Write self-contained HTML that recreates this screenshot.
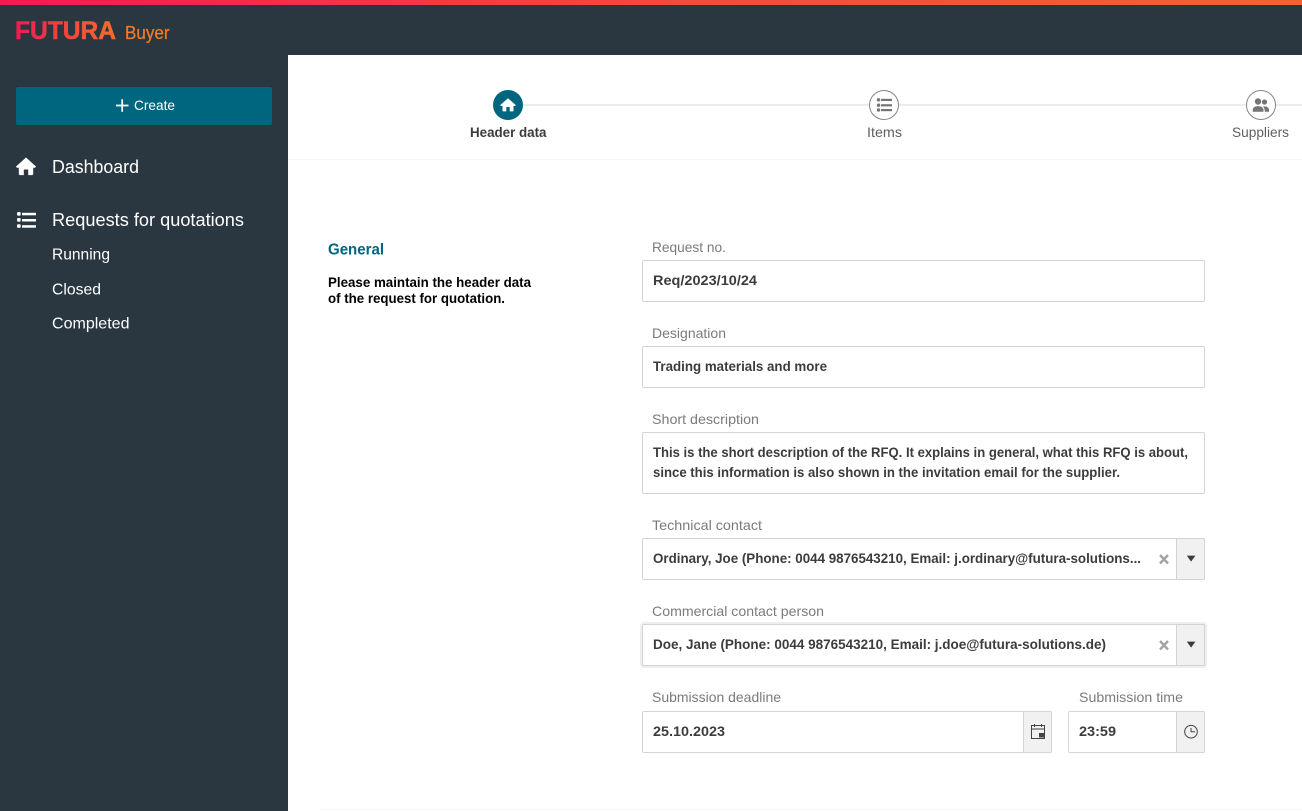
<!DOCTYPE html>
<html lang="en">
<head>
<meta charset="utf-8">
<title>FUTURA Buyer</title>
<style>
html,body{margin:0;padding:0;background:#fff}
#app{position:relative;width:1302px;height:811px;overflow:hidden;background:#fff;font-family:"Liberation Sans",sans-serif}
#app div{position:absolute;box-sizing:border-box}
.top{left:0;top:0;width:1302px;height:55px;background:#2a3640}
.bar{left:0;top:0;width:1302px;height:5px;background:linear-gradient(90deg,#ef1c52 0,#f4483f 50%,#f56133 100%)}
.side{left:0;top:55px;width:288px;height:756px;background:#2a3640}
.btn{left:16px;top:87px;width:256px;height:38px;background:#006680;border-radius:2px}
.hr1{left:288px;top:159px;width:1014px;height:1px;background:#f5f5f5}
.hr2{left:320px;top:809px;width:982px;height:1px;background:#f5f5f5}
.f{background:#fff;border:1px solid #d4d4d4;border-radius:2px}
.add{background:#f1f1f1;border:1px solid #d4d4d4;border-radius:0 2px 2px 0}
svg{position:absolute;left:0;top:0}
.l{font-size:14px;fill:#7b7b7b}
.v{font-size:14px;font-weight:700;fill:#3c3c3c}
.n{fill:#fff}
</style>
</head>
<body>
<div id="app">
<div class="top"></div>
<div class="bar"></div>
<div class="side"></div>
<div class="btn"></div>
<div class="hr1"></div>
<div class="hr2"></div>
<div class="f" style="left:642px;top:260px;width:563px;height:42px"></div>
<div class="f" style="left:642px;top:346px;width:563px;height:42px"></div>
<div class="f" style="left:642px;top:432px;width:563px;height:62px"></div>
<div class="f" style="left:642px;top:538px;width:563px;height:42px"></div>
<div class="add" style="left:1176px;top:538px;width:29px;height:42px"></div>
<div class="f" style="left:642px;top:624px;width:563px;height:42px;box-shadow:0 0 0 2px #eee"></div>
<div class="add" style="left:1176px;top:624px;width:29px;height:42px"></div>
<div class="f" style="left:642px;top:711px;width:410px;height:42px"></div>
<div class="add" style="left:1023px;top:711px;width:29px;height:42px"></div>
<div class="f" style="left:1068px;top:711px;width:137px;height:42px"></div>
<div class="add" style="left:1176px;top:711px;width:29px;height:42px"></div>

<svg width="1302" height="811" viewBox="0 0 1302 811" font-family="'Liberation Sans',sans-serif">
<defs>
<linearGradient id="g" gradientUnits="userSpaceOnUse" x1="15" y1="0" x2="130" y2="0">
<stop offset="0" stop-color="#ee1c52"/><stop offset="1" stop-color="#f47a26"/>
</linearGradient>
</defs>

<text x="15" y="39" font-size="25" font-weight="700" fill="url(#g)" stroke="url(#g)" stroke-width=".5" textLength="101" lengthAdjust="spacingAndGlyphs">FUTURA</text>
<text x="125" y="39" font-size="18" fill="#f47a26" stroke="#f47a26" stroke-width=".25" textLength="44.5" lengthAdjust="spacingAndGlyphs">Buyer</text>

<path d="M116 105.5h12.5M122.2 99.2v12.5" stroke="#fff" stroke-width="1.7" fill="none"/>
<text class="n" x="134" y="110" font-size="14" textLength="41" lengthAdjust="spacingAndGlyphs">Create</text>

<path d="M26 157.5L16 166.5l.8 1.2h2v6.2c0 .8.5 1.2 1.2 1.2h3.8v-5.6h4.4v5.6H32c.7 0 1.2-.4 1.2-1.2v-6.2h2l.8-1.2z" fill="#fff"/>
<text class="n" x="52" y="173" font-size="18" textLength="87" lengthAdjust="spacingAndGlyphs">Dashboard</text>

<g fill="#fff">
<rect x="17" y="212" width="3.7" height="3.7" rx="1.2"/><rect x="17" y="218" width="3.7" height="3.7" rx="1.2"/><rect x="17" y="224.2" width="3.7" height="3.7" rx="1.2"/>
<rect x="22" y="212.8" width="14" height="2.5"/><rect x="22" y="219" width="14" height="2.5"/><rect x="22" y="225.2" width="14" height="2.5"/>
</g>
<text class="n" x="52" y="226" font-size="18" textLength="192" lengthAdjust="spacingAndGlyphs">Requests for quotations</text>
<text class="n" x="52" y="259.5" font-size="16" textLength="58" lengthAdjust="spacingAndGlyphs">Running</text>
<text class="n" x="52" y="294.5" font-size="16" textLength="49" lengthAdjust="spacingAndGlyphs">Closed</text>
<text class="n" x="52" y="328.5" font-size="16" textLength="77.5" lengthAdjust="spacingAndGlyphs">Completed</text>

<rect x="508" y="104" width="794" height="2" fill="#ececec"/>
<circle cx="508" cy="105" r="15" fill="#006680"/>
<path d="M508 98.2l-7.8 6.9.6.9h1.7v4.6c0 .5.3.8.8.8h3v-4.4h3.4v4.4h3c.5 0 .8-.3.8-.8V106h1.7l.6-.9z" fill="#fff"/>
<circle cx="884" cy="105" r="14.5" fill="#fff" stroke="#858585"/>
<g fill="#757575">
<circle cx="878.5" cy="99.8" r="1.7"/><circle cx="878.5" cy="105.2" r="1.7"/><circle cx="878.5" cy="110" r="1.7"/>
<rect x="881" y="98.8" width="11" height="2.2"/><rect x="881" y="104.2" width="11" height="2.2"/><rect x="881" y="109" width="11" height="2.2"/>
</g>
<circle cx="1261" cy="105" r="14.5" fill="#fff" stroke="#858585"/>
<g fill="#757575">
<circle cx="1264.5" cy="102" r="2.6"/>
<path d="M1263 106.5c3.5-.6 6 .8 6 3.5v1.7h-4.2c0-2-.6-4-1.8-5.2z"/>
<circle cx="1258" cy="101.5" r="3.2"/>
<path d="M1252.7 111.7v-2c0-2.2 2.6-3.6 5.3-3.6s5.5 1.4 5.5 3.6v2z"/>
</g>
<text x="470" y="137" font-size="14" font-weight="700" fill="#3c3c3c" textLength="76.5" lengthAdjust="spacingAndGlyphs">Header data</text>
<text x="867" y="137" font-size="14" fill="#5f5f5f" textLength="35" lengthAdjust="spacingAndGlyphs">Items</text>
<text x="1232" y="137" font-size="14" fill="#5f5f5f" textLength="57" lengthAdjust="spacingAndGlyphs">Suppliers</text>

<text x="328" y="254.5" font-size="16" font-weight="700" fill="#006680" textLength="56" lengthAdjust="spacingAndGlyphs">General</text>
<text x="328" y="287" font-size="14" font-weight="700" fill="#000" textLength="203" lengthAdjust="spacingAndGlyphs">Please maintain the header data</text>
<text x="328" y="303" font-size="14" font-weight="700" fill="#000" textLength="177" lengthAdjust="spacingAndGlyphs">of the request for quotation.</text>

<text class="l" x="652" y="252" textLength="74" lengthAdjust="spacingAndGlyphs">Request no.</text>
<text class="v" x="653" y="285" textLength="104" lengthAdjust="spacingAndGlyphs">Req/2023/10/24</text>
<text class="l" x="652" y="338" textLength="74" lengthAdjust="spacingAndGlyphs">Designation</text>
<text class="v" x="653" y="371" textLength="174" lengthAdjust="spacingAndGlyphs">Trading materials and more</text>
<text class="l" x="652" y="424" textLength="107" lengthAdjust="spacingAndGlyphs">Short description</text>
<text class="v" x="653" y="457" textLength="535" lengthAdjust="spacingAndGlyphs">This is the short description of the RFQ. It explains in general, what this RFQ is about,</text>
<text class="v" x="653" y="477" textLength="467" lengthAdjust="spacingAndGlyphs">since this information is also shown in the invitation email for the supplier.</text>
<text class="l" x="652" y="530" textLength="110" lengthAdjust="spacingAndGlyphs">Technical contact</text>
<text class="v" x="653" y="563" textLength="488" lengthAdjust="spacingAndGlyphs">Ordinary, Joe (Phone: 0044 9876543210, Email: j.ordinary@futura-solutions...</text>
<text class="l" x="652" y="616" textLength="172" lengthAdjust="spacingAndGlyphs">Commercial contact person</text>
<text class="v" x="653" y="649" textLength="453" lengthAdjust="spacingAndGlyphs">Doe, Jane (Phone: 0044 9876543210, Email: j.doe@futura-solutions.de)</text>
<text class="l" x="652" y="702" textLength="129" lengthAdjust="spacingAndGlyphs">Submission deadline</text>
<text class="v" x="653" y="736" textLength="72" lengthAdjust="spacingAndGlyphs">25.10.2023</text>
<text class="l" x="1079" y="702" textLength="104" lengthAdjust="spacingAndGlyphs">Submission time</text>
<text class="v" x="1079" y="736" textLength="37" lengthAdjust="spacingAndGlyphs">23:59</text>

<path d="M1160 555l8 8.5M1168 555l-8 8.5M1160 641l8 8.5M1168 641l-8 8.5" stroke="#a3a3a3" stroke-width="2.4" fill="none"/>
<path d="M1186.8 555.6h8.6l-4.3 6zM1186.8 641.6h8.6l-4.3 6z" fill="#3c3c3c"/>

<g fill="none" stroke="#444" stroke-width="1">
<rect x="1031.5" y="725.5" width="13" height="13"/>
<path d="M1031.5 729h13M1034.5 724v3M1041.5 724v3"/>
<circle cx="1191" cy="731.7" r="6.3"/>
<path d="M1191 728v3.7h4"/>
</g>
<rect x="1039" y="733" width="5" height="4.5" fill="#444"/>
</svg>
</div>
</body>
</html>
